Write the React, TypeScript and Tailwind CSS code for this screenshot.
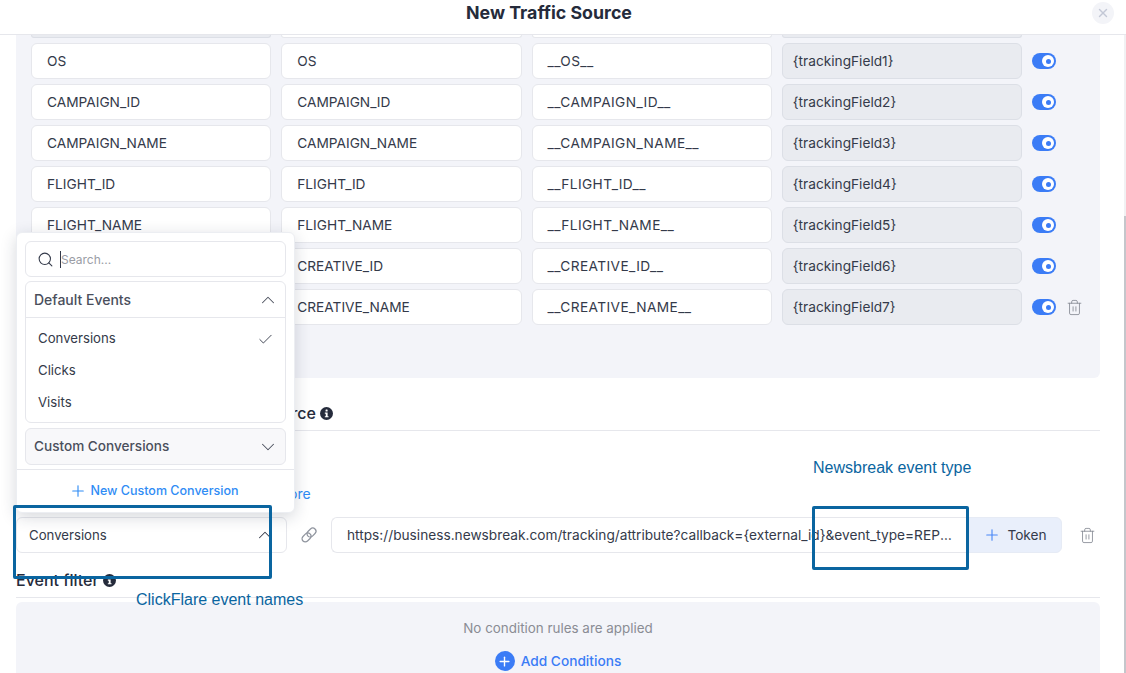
import React from "react";
import { Check, ChevronDown, ChevronUp, Plus, Search, Trash2, X } from "lucide-react";

const rows = [
  ["OS", "__OS__", "{trackingField1}"],
  ["CAMPAIGN_ID", "__CAMPAIGN_ID__", "{trackingField2}"],
  ["CAMPAIGN_NAME", "__CAMPAIGN_NAME__", "{trackingField3}"],
  ["FLIGHT_ID", "__FLIGHT_ID__", "{trackingField4}"],
  ["FLIGHT_NAME", "__FLIGHT_NAME__", "{trackingField5}"],
  ["CREATIVE_ID", "__CREATIVE_ID__", "{trackingField6}"],
  ["CREATIVE_NAME", "__CREATIVE_NAME__", "{trackingField7}"],
];

function InfoDot() {
  return (
    <svg width="13" height="13" viewBox="0 0 14 14" className="mt-[3px] shrink-0">
      <circle cx="7" cy="7" r="7" fill="#252b3b" />
      <rect x="6" y="2.6" width="2.2" height="2.2" rx="0.6" fill="#fff" />
      <path d="M5.2 6h3v3.9h1v1.2H5.2V9.9h1V7.2h-1z" fill="#fff" />
    </svg>
  );
}

function ChainIcon() {
  return (
    <svg width="20" height="20" viewBox="0 0 20 20" fill="none" stroke="#8f949e" strokeWidth="1.2" className="ml-[12px] shrink-0">
      <g transform="rotate(-45 10 10)">
        <rect x="1.5" y="6.8" width="10" height="6.4" rx="3.2" />
        <rect x="8.5" y="6.8" width="10" height="6.4" rx="3.2" />
      </g>
    </svg>
  );
}

function Field({ text, kind }: { text: string; kind?: "grey" | "token" }) {
  return (
    <div
      className={`flex h-9 items-center rounded-md border ${
        kind === "grey" ? "border-[#dcdfe6] bg-[#e9ebf0] pl-[10px]" : "border-[#e6e7ec] bg-white pl-[15px]"
      } ${kind === "token" ? "tracking-[0.03em]" : ""}`}
    >
      {text}
    </div>
  );
}

function Toggle() {
  return (
    <div className="flex h-4 w-6 shrink-0 items-center justify-end rounded-full bg-[#3b7cf6] pr-[2px]">
      <div className="flex h-3 w-3 items-center justify-center rounded-full bg-white">
        <div className="h-[5px] w-[5px] rounded-full bg-[#3b7cf6]" />
      </div>
    </div>
  );
}

function Row({ r }: { r: string[] }) {
  return (
    <div className="flex items-center gap-[10px]">
      <div className="grid w-[991px] grid-cols-4 gap-[10px]">
        <Field text={r[0]} />
        <Field text={r[0]} />
        <Field text={r[1]} kind="token" />
        <Field text={r[2]} kind="grey" />
      </div>
      <Toggle />
      {r[0] === "CREATIVE_NAME" && <Trash2 size={17} strokeWidth={1.2} className="text-[#858a94]" />}
    </div>
  );
}

export default function App() {
  return (
    <div className="relative h-[673px] w-[1126px] overflow-hidden bg-white font-['Inter','Liberation_Sans',sans-serif] text-[13.7px] text-[#343a4a]">
      <header className="relative flex h-[35px] items-center justify-center border-b border-[#e6e7ec] pb-[8px] pr-[28px]">
        <h1 className="text-[17.8px] font-bold text-[#252b3b]">New Traffic Source</h1>
        <div className="absolute right-[12px] top-[2px] flex h-[22px] w-[22px] items-center justify-center rounded-full bg-[#f3f4f8]">
          <X size={14} strokeWidth={2.5} className="text-[#c3c8d6]" />
        </div>
      </header>

      <main className="absolute inset-x-0 top-[35px] h-[638px] w-[1116px] overflow-hidden pl-4">
        <section className="h-[343px] w-[1084px] rounded-b-md bg-[#f3f4f9] px-[15px]">
          <div className="flex flex-col gap-[5px]">
            <div className="grid h-[3px] w-[991px] grid-cols-4 gap-[10px]">
              <div className="rounded-b-md border border-t-0 border-[#dcdfe6] bg-[#e9ebf0]" />
              <div className="rounded-b-md border border-t-0 border-[#e6e7ec] bg-white" />
              <div className="rounded-b-md border border-t-0 border-[#e6e7ec] bg-white" />
              <div className="rounded-b-md border border-t-0 border-[#dcdfe6] bg-[#e9ebf0]" />
            </div>
            {rows.map((r) => (
              <Row key={r[0]} r={r} />
            ))}
          </div>
        </section>

        <div className="mt-[26px] flex h-[27px] w-[1084px] items-start gap-1 border-b border-[#e6e7ec] text-base font-medium text-[#252b3b]">
          <span className="leading-[19px]">Conversion Tracking per Traffic Source</span>
          <InfoDot />
        </div>

        <a className="mt-[55px] block pl-[219px] text-[14px] leading-4 text-[#2f8cf5]">Learn more</a>

        <div className="mt-[15px] flex h-9 items-center">
          <div className="flex h-9 w-[271px] items-center justify-between rounded-md border border-[#e6e7ec] pl-3 pr-[10px] text-[13.2px]">
            <span className="pt-px">Conversions</span>
            <ChevronUp size={22} strokeWidth={1.1} />
          </div>
          <ChainIcon />
          <div className="ml-[12px] flex h-9 w-[637px] items-center rounded-l-md border border-r-0 border-[#e6e7ec] pl-[15px] pr-[10px]">
            <span className="truncate">https://business.newsbreak.com/tracking/attribute?callback={"{external_id}"}&amp;event_type=REPORT_EVENT</span>
          </div>
          <div className="flex h-9 w-[94px] items-center justify-center gap-[6px] rounded-r-md border border-[#e6ebf5] bg-[#e9effb]">
            <Plus size={18} strokeWidth={1.5} className="text-[#4a88f7]" />
            <span>Token</span>
          </div>
          <Trash2 size={17} strokeWidth={1.2} className="ml-[17px] text-[#858a94]" />
        </div>

        <div className="mt-[18px] flex h-[27px] w-[1084px] items-start gap-1 border-b border-[#e6e7ec] text-base font-medium text-[#252b3b]">
          <span className="leading-[19px]">Event filter</span>
          <InfoDot />
        </div>

        <section className="mt-[4px] flex h-[100px] w-[1084px] flex-col items-center rounded-md bg-[#f3f4f9] pt-[16px]">
          <span className="text-[13.4px] leading-5 text-[#8a8c94]">No condition rules are applied</span>
          <div className="mt-[13px] flex items-center gap-[6px]">
            <div className="flex h-5 w-5 items-center justify-center rounded-full bg-[#3b7cf6]">
              <Plus size={15} strokeWidth={2.2} className="text-white" />
            </div>
            <span className="font-medium text-[#3b7cf6]">Add Conditions</span>
          </div>
        </section>
      </main>

      {/* scrollbar */}
      <div className="absolute bottom-0 right-0 top-[35px] w-[2px] bg-[#f1f1f3]" />
      <div className="absolute right-0 top-[216px] h-[457px] w-[2px] bg-[#c4c6cb]" />

      {/* dropdown popover */}
      <div className="absolute left-[16px] top-[232px] flex h-[281px] w-[279px] flex-col rounded-md border border-[#eceef2] bg-white px-2 pt-2 shadow-[0_4px_16px_rgba(30,40,60,0.18)]">
        <div className="flex h-9 shrink-0 items-center rounded-md border border-[#e6e7ec] pl-[11px]">
          <Search size={17} strokeWidth={1.5} className="text-[#343a4a]" />
          <span className="ml-[6px] h-[17px] w-px bg-[#343a4a]" />
          <span className="pt-[2px] text-[12px] leading-none text-[#9a9da5]">Search...</span>
        </div>
        <div className="mt-[4px] h-[142px] shrink-0 rounded-md border border-[#e6e7ec]">
          <div className="flex h-9 items-center justify-between border-b border-[#e6e7ec] pl-2 pr-[6px] text-[14px] font-medium text-[#4a4f5c]">
            <span>Default Events</span>
            <ChevronUp size={22} strokeWidth={1.1} />
          </div>
          <div className="flex flex-col pt-[5px] text-[13.2px]">
            <div className="flex h-8 items-center justify-between pl-3 pr-[11px]">
              <span>Conversions</span>
              <Check size={17} strokeWidth={1.2} className="text-[#252b3b]" />
            </div>
            <div className="flex h-8 items-center pl-3">Clicks</div>
            <div className="flex h-8 items-center pl-3">Visits</div>
          </div>
        </div>
        <div className="mt-[5px] flex h-[37px] shrink-0 items-center justify-between rounded-md border border-[#e6e7ec] bg-[#f8f8fa] pl-2 pr-[6px] text-[13.6px] font-medium text-[#4a4f5c]">
          <span>Custom Conversions</span>
          <ChevronDown size={22} strokeWidth={1.1} />
        </div>
        <div className="-mx-2 mt-[4px] flex h-[43px] items-center justify-center gap-[4px] border-t border-[#e6e7ec] pr-[4px] text-[12.5px] font-medium text-[#2f8cf5]">
          <Plus size={18} strokeWidth={1.5} />
          <span>New Custom Conversion</span>
        </div>
      </div>

      {/* annotations */}
      <div className="absolute left-[13px] top-[505px] h-[74px] w-[259px] rounded-[2px] border-[3px] border-[#0a65a0]" />
      <div className="absolute left-[812px] top-[506px] h-[64px] w-[157px] rounded-[2px] border-[3px] border-[#0a65a0]" />
      <span className="absolute left-[813px] top-[458px] font-['Liberation_Sans',sans-serif] text-base leading-[19px] text-[#0a65a0]">Newsbreak event type</span>
      <span className="absolute left-[136px] top-[590px] font-['Liberation_Sans',sans-serif] text-base leading-[19px] text-[#0a65a0]">ClickFlare event names</span>
    </div>
  );
}
